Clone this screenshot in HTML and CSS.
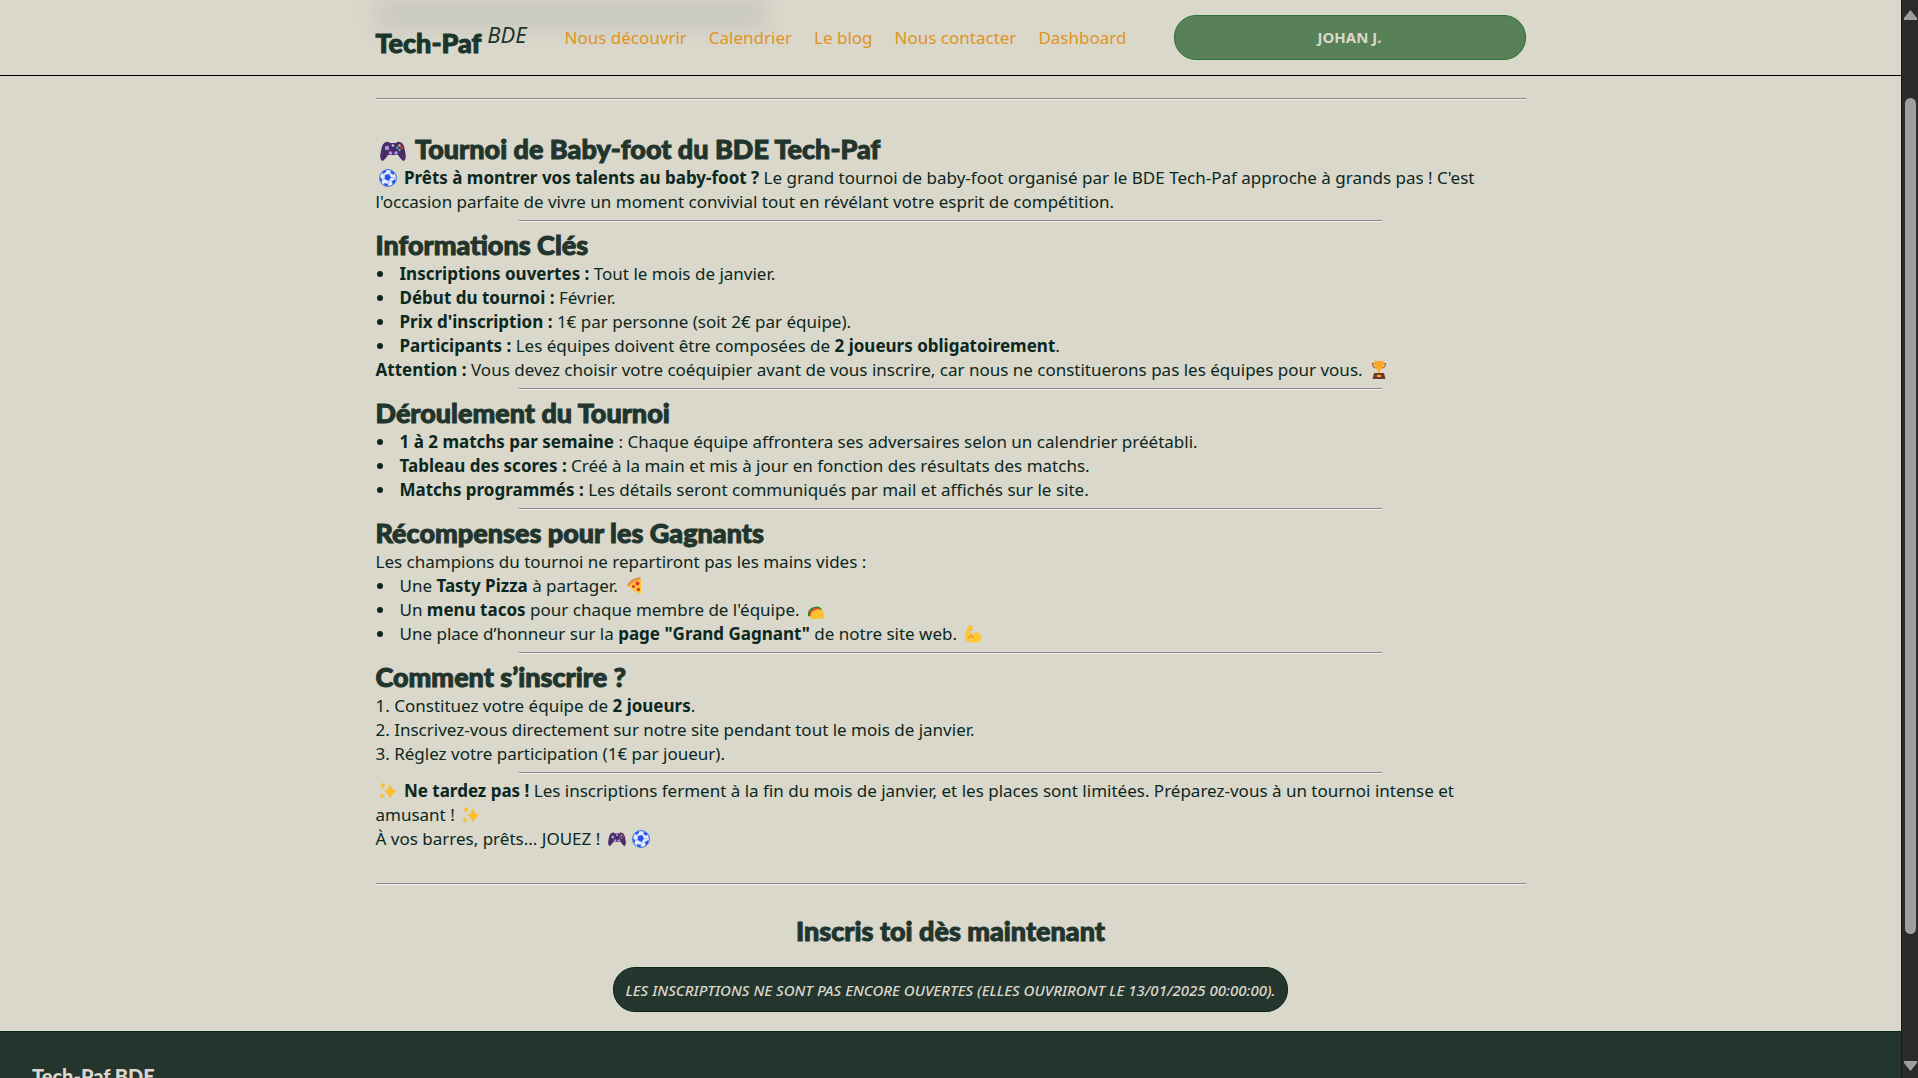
FILE: index.html
```html
<!DOCTYPE html>
<html lang="fr">
<head>
<meta charset="utf-8">
<title>Tournoi de Baby-foot - Tech-Paf BDE</title>
<link rel="stylesheet" href="styles.css">
</head>
<body>
<svg class="sprite" aria-hidden="true">
  <symbol id="gamepad" viewBox="0 0 26 20">
    <path fill="#4b2a68" d="M6 1Q8 0 10 2H16Q18 0 20 1Q24 2 25 10Q27 18 24 20Q22 20 18 14H8Q4 20 2 20Q-1 18 1 10Q2 2 6 1Z"/>
    <circle cx="7" cy="7" r="2.2" fill="#a99ae8"/><circle cx="10.500" cy="12" r="1.800" fill="#a99ae8"/><circle cx="16" cy="12" r="1.800" fill="#a99ae8"/><circle cx="13" cy="4.500" r="1.300" fill="#c9bff5"/>
    <circle cx="19.500" cy="4.500" r="1.200" fill="#fbc02d"/><circle cx="17.300" cy="6.800" r="1.200" fill="#29b6f6"/><circle cx="21.700" cy="6.800" r="1.200" fill="#f44336"/><circle cx="19.500" cy="9" r="1.200" fill="#66bb6a"/>
  </symbol>
  <symbol id="ball" viewBox="0 0 18 18">
    <circle cx="9" cy="9" r="8.400" fill="#e8ecfb" stroke="#2f6be0" stroke-width="1"/>
    <g fill="#2553f0"><path d="M6 6L10 5L12 8.500L9.500 12L5.500 10Z"/><path d="M3 3L7 1L7 3L4 5Z"/><path d="M12 1.500L15.500 4L14.500 6L11.500 4Z"/><path d="M1 8L3 10L3 13L1.500 12Z"/><path d="M5.500 14L9 15L8.500 17.500L5 16Z"/><path d="M13 12L16.500 10L16 13.500L13.500 15.500Z"/></g>
    <path d="M6 6L4 5M10 5L11.500 4M12 8.500L16 9M9.500 12L13 12M5.500 10L3 10M9.500 12L9 15" stroke="#7d9bee" stroke-width=".6"/>
  </symbol>
  <symbol id="trophy" viewBox="0 0 18 18">
    <path d="M5 2.500H2.500Q2.500 7 7 7M13 2.500H15.500Q15.500 7 11 7" fill="none" stroke="#b5651d" stroke-width="1.200"/>
    <path d="M4.500 0H13.500V4Q13 8 10 9V12H8V9Q5 8 4.500 4Z" fill="#ffa726"/>
    <path d="M4 12H14L15.500 18H2.500Z" fill="#6d3a2c"/><path d="M7 14H11V16H7Z" fill="#ffb52b"/>
  </symbol>
  <symbol id="pizza" viewBox="0 0 18 18">
    <path d="M2 8Q6 1 15 0L16 3Q8 4 4 10Z" fill="#e8934a"/><path d="M4 9Q8 4 16 2.500V17Q9 15 4 9Z" fill="#fdc935"/>
    <g fill="#e53224"><circle cx="12.500" cy="6.500" r="2"/><circle cx="8.500" cy="9.500" r="1.600"/><circle cx="13.500" cy="12.500" r="1.700"/></g>
  </symbol>
  <symbol id="taco" viewBox="0 0 18 18">
    <path d="M1 15Q0 8 7 6Q13 4 15 9L5 16Z" fill="#2b8a22"/><path d="M2.500 14Q3 8 8 7Q12 6 14 9L5 16Z" fill="#e64a35"/>
    <path d="M4 18Q2 13 6 10Q12 6.500 16 10Q18 13 17 17Q10 19 4 18Z" fill="#fcc233"/>
  </symbol>
  <symbol id="muscle" viewBox="0 0 18 18">
    <path d="M4 1Q7-1 9 2L8 5L6 5Q6 8 7 10Q11 6 15 8Q18 10 17 15Q14 19 6 17Q0 17 1 12Q2 5 4 1Z" fill="#fdc838"/>
    <path d="M6 5L8 5M6 9Q8 10 9 13M4 13L7 11" stroke="#d8802a" fill="none"/>
  </symbol>
  <symbol id="sparkles" viewBox="0 0 18 18">
    <path fill="#fdbf2d" d="M11 2Q12.500 8 18 9.500Q12.500 11 11 17Q9.500 11 5 9.500Q9.500 8 11 2ZM4 0Q4.500 3 7 3.500Q4.500 4 4 7Q3.500 4 1 3.500Q3.500 3 4 0ZM3 11Q3.500 13.500 6 14Q3.500 14.500 3 17Q2.500 14.500 0 14Q2.500 13.500 3 11Z"/>
  </symbol>
</svg>
<div class="window">
  <div class="page">
    <header class="topbar">
      <div class="container topbar-inner">
        <span class="haze"></span>
        <a class="logo" href="#">Tech-Paf <em>BDE</em></a>
        <nav class="menu">
          <a href="#">Nous découvrir</a>
          <a href="#">Calendrier</a>
          <a href="#">Le blog</a>
          <a href="#">Nous contacter</a>
          <a href="#">Dashboard</a>
        </nav>
        <button class="pill account" type="button">JOHAN J.</button>
      </div>
    </header>
    <main class="container content">
      <hr class="wide">
      <article>
        <h2><svg class="icon-large"><use href="#gamepad"/></svg> Tournoi de Baby-foot du BDE Tech-Paf</h2>
        <p><svg class="icon"><use href="#ball"/></svg> <strong>Prêts à montrer vos talents au baby-foot ?</strong> Le grand tournoi de baby-foot organisé par le BDE Tech-Paf approche à grands pas ! C'est l'occasion parfaite de vivre un moment convivial tout en révélant votre esprit de compétition.</p>
        <hr>
        <h2>Informations Clés</h2>
        <ul>
          <li><strong>Inscriptions ouvertes :</strong> Tout le mois de janvier.</li>
          <li><strong>Début du tournoi :</strong> Février.</li>
          <li><strong>Prix d'inscription :</strong> 1€ par personne (soit 2€ par équipe).</li>
          <li><strong>Participants :</strong> Les équipes doivent être composées de <strong>2 joueurs obligatoirement</strong>.</li>
        </ul>
        <p><strong>Attention :</strong> Vous devez choisir votre coéquipier avant de vous inscrire, car nous ne constituerons pas les équipes pour vous. <svg class="icon"><use href="#trophy"/></svg></p>
        <hr>
        <h2>Déroulement du Tournoi</h2>
        <ul>
          <li><strong>1 à 2 matchs par semaine</strong> : Chaque équipe affrontera ses adversaires selon un calendrier préétabli.</li>
          <li><strong>Tableau des scores :</strong> Créé à la main et mis à jour en fonction des résultats des matchs.</li>
          <li><strong>Matchs programmés :</strong> Les détails seront communiqués par mail et affichés sur le site.</li>
        </ul>
        <hr>
        <h2>Récompenses pour les Gagnants</h2>
        <p>Les champions du tournoi ne repartiront pas les mains vides :</p>
        <ul>
          <li>Une <strong>Tasty Pizza</strong> à partager. <svg class="icon"><use href="#pizza"/></svg></li>
          <li>Un <strong>menu tacos</strong> pour chaque membre de l'équipe. <svg class="icon"><use href="#taco"/></svg></li>
          <li>Une place d’honneur sur la <strong>page "Grand Gagnant"</strong> de notre site web. <svg class="icon"><use href="#muscle"/></svg></li>
        </ul>
        <hr>
        <h2>Comment s’inscrire ?</h2>
        <ol>
          <li>Constituez votre équipe de <strong>2 joueurs</strong>.</li>
          <li>Inscrivez-vous directement sur notre site pendant tout le mois de janvier.</li>
          <li>Réglez votre participation (1€ par joueur).</li>
        </ol>
        <hr>
        <p><svg class="icon"><use href="#sparkles"/></svg> <strong>Ne tardez pas !</strong> Les inscriptions ferment à la fin du mois de janvier, et les places sont limitées. Préparez-vous à un tournoi intense et amusant ! <svg class="icon"><use href="#sparkles"/></svg></p>
        <p>À vos barres, prêts... JOUEZ ! <svg class="icon"><use href="#gamepad"/></svg><svg class="icon"><use href="#ball"/></svg></p>
      </article>
      <hr class="wide">
      <section class="signup">
        <h2>Inscris toi dès maintenant</h2>
        <button class="pill notice" type="button">LES INSCRIPTIONS NE SONT PAS ENCORE OUVERTES (ELLES OUVRIRONT LE 13/01/2025 00:00:00).</button>
      </section>
    </main>
    <footer class="footer"><h3>Tech-Paf BDE</h3></footer>
  </div>
  <div class="scrollbar" aria-hidden="true">
    <svg class="arrow" viewBox="0 0 13 10"><path d="M6.500 0L13 8V10H0V8Z"/></svg>
    <span class="track"><span class="thumb"></span></span>
    <svg class="arrow" viewBox="0 0 13 10"><path d="M6.500 10L13 2V0H0V2Z"/></svg>
  </div>
</div>
</body>
</html>
```
FILE: styles.css
```css
* { box-sizing: border-box; margin: 0; padding: 0; }

body {
  background: #dad7cb;
  color: #0b281e;
  font: 17px/24px "Noto Sans", sans-serif;
}

.sprite { display: none; }

.window { display: flex; height: 100vh; overflow: hidden; }
.page { flex: 1; min-width: 0; overflow: hidden; }
.container { width: 100%; max-width: 1150px; margin: 0 auto; }

.topbar { border-bottom: 1px solid #000; }
.topbar-inner { position: relative; display: flex; align-items: center; height: 75px; }
.haze {
  position: absolute; top: 0; left: 0; width: 390px; height: 28px;
  background: #68746b; opacity: .16; filter: blur(12px);
}
.logo {
  position: relative; width: 189px; color: #1c352b; text-decoration: none;
  font: 900 27px/36px Lato, sans-serif; padding-top: 8px;
  -webkit-text-stroke: 1px #1c352b;
}
.logo em { font: italic 22px/24px "Noto Sans", sans-serif; vertical-align: 10px; -webkit-text-stroke: 0; }
.menu { position: relative; display: flex; gap: 22px; }
.menu a { color: #e09423; text-decoration: none; }

.pill {
  height: 45px; border: 1px solid; border-radius: 22px; color: #dad7cb;
  font: bold 15px/20px "Noto Sans", sans-serif;
}
.account { width: 352px; margin: -1px 0 0 auto; background: #588157; border-color: #2a7034; }
.notice { padding: 0 11px; background: #25362f; border-color: #08251a; font-weight: 500; font-style: italic; }

h2 { color: #22352d; font: 900 27px/35px Lato, sans-serif; -webkit-text-stroke: 1px #22352d; }
ul, ol { list-style-position: inside; }
ul li { display: flex; align-items: center; white-space: pre-wrap; }
ul li::before {
  content: ""; width: 6px; height: 6px; margin: 0 17px 0 1px;
  border-radius: 50%; background: #0b281e;
}
hr { width: 75%; margin: 6px auto 5px; border: 0; border-top: 1px solid #85888a; border-bottom: 1px solid #efeeea; }
.wide { width: 100%; margin: 32px 0 28px; }
.content > .wide:first-child { margin: 22px 0 31px; }

.icon { width: 18px; height: 18px; margin: 0 3px; vertical-align: -3px; }
.icon-large { width: 26px; height: 20px; margin: 0 4px; vertical-align: -2px; }

.signup { display: flex; flex-direction: column; align-items: center; gap: 19px; padding-bottom: 19px; }
.footer { border-top: 1px solid #08251a; padding: 30px 32px; background: #25362f; color: #dad7cb; }
.footer h3 { font: 900 20px/28px Lato, sans-serif; }

.scrollbar {
  width: 17px; display: flex; flex-direction: column; align-items: center;
  padding: 10px 0 7px; background: #2b2b2b; border-left: 1px solid #101c1a;
}
.arrow { width: 13px; height: 10px; fill: #9f9f9f; }
.track { flex: 1; width: 11px; padding: 78px 0 127px; display: flex; }
.thumb { flex: 1; border-radius: 6px; background: #9f9f9f; }
```
